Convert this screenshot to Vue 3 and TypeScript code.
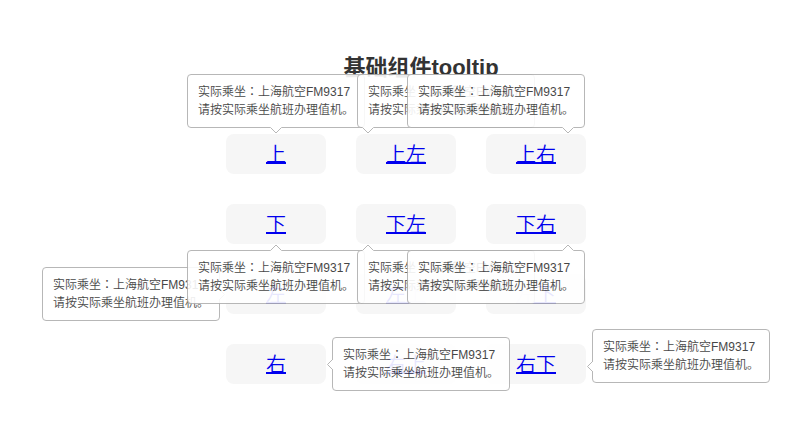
<script setup lang="ts">
type Placement = 'top' | 'bottom' | 'left' | 'right'
type Align = 'center' | 'start' | 'end' | 'low'

interface Item {
  label: string
  place?: Placement
  align?: Align
}

const rows: Item[][] = [
  [
    { label: '上', place: 'top', align: 'center' },
    { label: '上左', place: 'top', align: 'start' },
    { label: '上右', place: 'top', align: 'end' },
  ],
  [
    { label: '下', place: 'bottom', align: 'center' },
    { label: '下左', place: 'bottom', align: 'start' },
    { label: '下右', place: 'bottom', align: 'end' },
  ],
  [
    { label: '左', place: 'left', align: 'center' },
    { label: '左上' },
    { label: '左下' },
  ],
  [
    { label: '右', place: 'right', align: 'center' },
    { label: '右上' },
    { label: '右下', place: 'right', align: 'low' },
  ],
]
</script>

<template>
  <main class="page">
    <h1>基础组件tooltip</h1>
    <div class="grid">
      <template v-for="(row, r) in rows" :key="r">
        <div v-for="item in row" :key="item.label" class="cell">
          <a href="#">{{ item.label }}</a>
          <div v-if="item.place" role="tooltip" class="tip" :class="[item.place, item.align]">
            实际乘坐<span class="colon">：</span>上海航空FM9317<br />请按实际乘坐航班办理值机。
            <svg class="arrow" viewBox="0 0 12 7" aria-hidden="true">
              <path class="fill" d="M0 0H12L6 6Z" />
              <path class="edge" d="M0.5 0.5L6 6L11.5 0.5" />
            </svg>
          </div>
        </div>
      </template>
    </div>
  </main>
</template>

<style>
body {
  background: #fff;
}
</style>

<style scoped>
.page {
  padding: 51px 0 60px;
  font-family: "Liberation Sans", "Noto Sans CJK SC", sans-serif;
  color: #333;
}
h1 {
  margin: 0 0 49px;
  padding-left: 30px;
  font-size: 22px;
  line-height: 34px;
  text-align: center;
}
.grid {
  display: grid;
  grid-template-columns: repeat(3, 100px);
  gap: 30px;
  justify-content: center;
}
.cell {
  position: relative;
  height: 40px;
  border-radius: 8px;
  background: #f6f6f6;
  font-size: 20px;
  font-weight: 350;
  line-height: 42px;
  text-align: center;
}
a {
  color: #00e;
  text-decoration-thickness: 2px;
  text-underline-offset: 0;
}
.tip {
  position: absolute;
  z-index: 1;
  box-sizing: border-box;
  width: 178px;
  padding: 8px 10px;
  border: 1px solid #b0b0b0;
  border-radius: 4px;
  background: #fff;
  opacity: 0.9;
  color: #333;
  font-size: 12px;
  font-weight: 350;
  line-height: 18px;
  text-align: left;
  white-space: nowrap;
}
.colon {
  font-family: "Noto Sans CJK TC", sans-serif;
  line-height: 12px;
}
.top {
  bottom: 46px;
}
.bottom {
  top: 46px;
  z-index: 2;
}
.top.center,
.bottom.center {
  left: -39px;
}
.start {
  left: 1px;
}
.end {
  right: 1px;
}
.left {
  right: 106px;
  top: -7px;
}
.right {
  left: 106px;
  top: -7px;
}
.right.low {
  top: -15px;
}
.arrow {
  position: absolute;
  width: 12px;
  height: 7px;
}
.fill {
  fill: #fff;
}
.edge {
  fill: none;
  stroke: #b0b0b0;
}
.top .arrow {
  top: 100%;
  left: 82px;
}
.bottom .arrow {
  bottom: 100%;
  left: 82px;
  transform: rotate(180deg);
}
.start .arrow {
  left: 4px;
}
.end .arrow {
  left: 154px;
}
.left .arrow {
  left: calc(100% - 3px);
  top: 23px;
  transform: rotate(-90deg);
}
.right .arrow {
  right: calc(100% - 3px);
  top: 23px;
  transform: rotate(90deg);
}
.low .arrow {
  top: 33px;
}
</style>
